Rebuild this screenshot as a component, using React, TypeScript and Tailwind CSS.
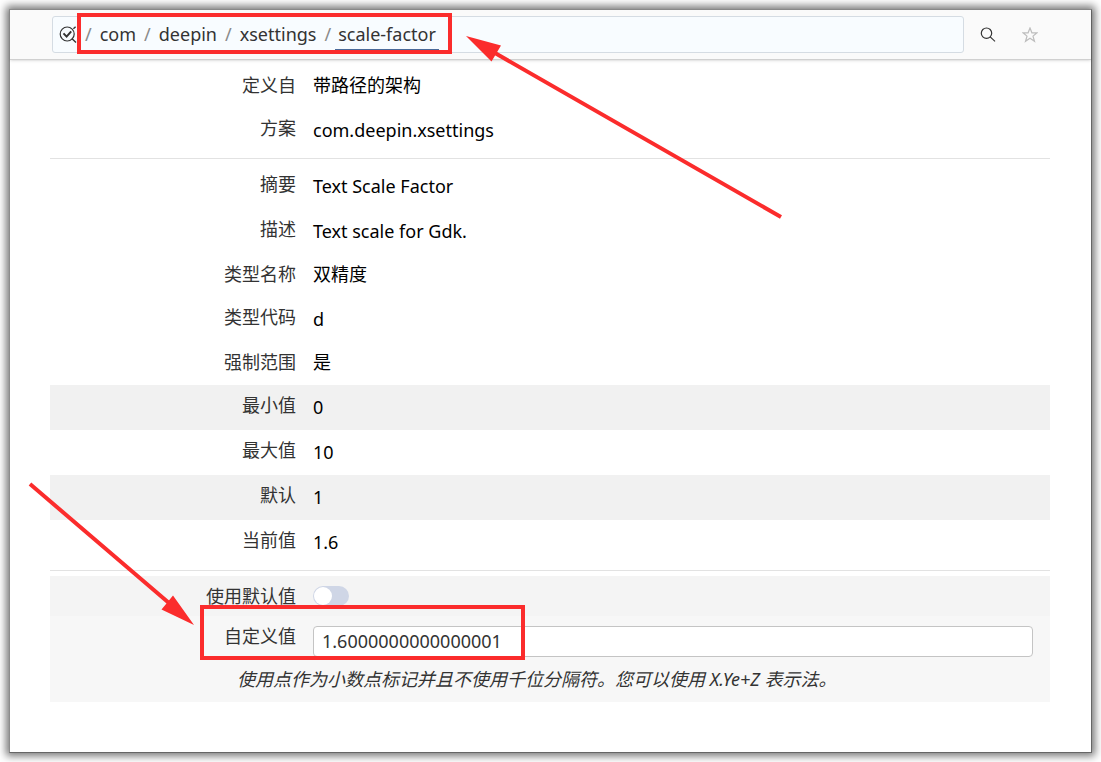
import { useState } from 'react';
import type { ReactNode } from 'react';

interface Property {
  label: string;
  value: string;
  cjk?: boolean;
  shaded?: boolean;
}

const PATH = ['com', 'deepin', 'xsettings'];

const SCHEMA_ROWS: Property[] = [
  { label: '定义自', value: '带路径的架构', cjk: true },
  { label: '方案', value: 'com.deepin.xsettings' },
];

const KEY_ROWS: Property[] = [
  { label: '摘要', value: 'Text Scale Factor' },
  { label: '描述', value: 'Text scale for Gdk.' },
  { label: '类型名称', value: '双精度', cjk: true },
  { label: '类型代码', value: 'd' },
  { label: '强制范围', value: '是', cjk: true },
  { label: '最小值', value: '0', shaded: true },
  { label: '最大值', value: '10' },
  { label: '默认', value: '1', shaded: true },
  { label: '当前值', value: '1.6' },
];

function PropertyList({ rows }: { rows: Property[] }) {
  return (
    <dl className="py-[5px]">
      {rows.map((row) => (
        <div
          key={row.label}
          className={`grid grid-cols-[246px_1fr] gap-x-[17px] ${row.shaded ? 'bg-[#f1f1f1]' : ''}`}
        >
          <dt className="text-right leading-[41px] text-[#333333]">{row.label}</dt>
          <dd className={`text-black ${row.cjk ? 'pb-[2px] leading-[41px]' : 'leading-[45px]'}`}>
            {row.value}
          </dd>
        </div>
      ))}
    </dl>
  );
}

function Crumb({ children }: { children: ReactNode }) {
  return (
    <>
      <a href="#" className="px-[4px] text-[#333333]">
        {children}
      </a>
      <span className="px-[4px] text-[#8a8a8a]">/</span>
    </>
  );
}

function PathBar() {
  return (
    <header className="flex h-[50px] items-center border-b border-[#d0d0d0] bg-[#fafafa] pr-[40px] pl-[42px] shadow-sm">
      <nav
        aria-label="路径"
        className="flex h-[37px] flex-1 items-center rounded-[3px] border border-[#d5dce3] bg-[#f8fcff] pl-[6px]"
      >
        <svg viewBox="0 0 18 18" className="h-[18px] w-[18px]" fill="none" stroke="#333333">
          <circle cx="8.2" cy="8" r="7" strokeWidth="1.2" />
          <path d="M4.5 7.4 7.6 10.6 12.2 5.4" strokeWidth="2" />
          <path d="M12.8 12.6 17 16.6M14.4 2.8 16.6 .8" strokeWidth="1.4" />
        </svg>
        <span className="pr-[4px] pl-[8px] text-[#8a8a8a]">/</span>
        {PATH.map((part) => (
          <Crumb key={part}>{part}</Crumb>
        ))}
        <a
          href="#"
          aria-current="page"
          className="border-b-2 border-[#4a6a9a] px-[3px] leading-[30px] text-[#333333]"
        >
          scale-factor
        </a>
      </nav>
      <div className="flex pl-[3px]">
        <button type="button" aria-label="搜索" className="flex h-[36px] w-[42px] items-center justify-center">
          <svg viewBox="0 0 16 16" className="h-[16px] w-[16px]" fill="none" stroke="#333333" strokeWidth="1.2">
            <circle cx="6.5" cy="6.2" r="5.2" />
            <path d="M10.2 9.9 15 14.4" />
          </svg>
        </button>
        <button type="button" aria-label="收藏" className="flex h-[36px] w-[42px] items-center justify-center">
          <svg viewBox="0 0 16 16" className="h-[16px] w-[16px]" fill="none" stroke="#bdbdbd" strokeWidth="1.2">
            <path d="M8 1 9.9 5.8H15L11 9.1 12.5 14.3 8 11.3 3.5 14.3 5 9.1 1 5.8H6.1Z" />
          </svg>
        </button>
      </div>
    </header>
  );
}

function CustomValue() {
  const [useDefault, setUseDefault] = useState(false);
  const [value, setValue] = useState('1.6000000000000001');

  return (
    <form className="mt-[5px] bg-[#f7f7f7]">
      <div className="grid h-[40px] grid-cols-[246px_1fr] items-center gap-x-[17px] bg-[#f4f4f4]">
        <label htmlFor="use-default" className="text-right">
          使用默认值
        </label>
        <input
          id="use-default"
          type="checkbox"
          role="switch"
          checked={useDefault}
          onChange={(e) => setUseDefault(e.target.checked)}
          className="h-[20px] w-[36px] appearance-none rounded-full bg-[#cfd6e6] p-[1px] before:block before:h-[18px] before:w-[18px] before:rounded-full before:bg-white checked:bg-[#4a8ee0] checked:before:ml-[16px]"
        />
      </div>
      <div className="grid grid-cols-[246px_1fr] gap-x-[17px] pr-[17px]">
        <label htmlFor="custom-value" className="text-right leading-[41px]">
          自定义值
        </label>
        <input
          id="custom-value"
          type="text"
          value={value}
          onChange={(e) => setValue(e.target.value)}
          className="mt-[10px] h-[31px] w-full rounded-[4px] border border-[#c4c4c4] bg-white px-[8px] pb-[2px] text-[#333333]"
        />
      </div>
      <p className="pl-[187px] leading-[45px] italic">
        使用点作为小数点标记并且不使用千位分隔符。您可以使用 X.Ye+Z 表示法。
      </p>
    </form>
  );
}

// Red call-outs drawn over the window
function Annotations() {
  return (
    <svg
      width="800"
      height="700"
      aria-hidden="true"
      className="pointer-events-none absolute top-0 left-0"
      fill="none"
      stroke="#fb2c2c"
      strokeWidth="4"
    >
      <rect x="79" y="15" width="371" height="37" />
      <rect x="202" y="607" width="321" height="51" />
      <path d="M781 217 495 53M30 484 169 603" />
      <path d="M466 36 501 45.500 491.500 61.500ZM194 625 173 595.500 161.500 609.500Z" fill="#fb2c2c" stroke="none" />
    </svg>
  );
}

export default function App() {
  return (
    <div className="relative flex min-h-screen bg-white p-[9px] font-['Noto_Sans','Noto_Sans_CJK_SC',sans-serif] text-[18px] text-[#333333]">
      <main className="flex-1 border border-t-[#8c8c8c] border-r-[#666666] border-b-[#666666] border-l-[#8c8c8c] bg-white shadow-[0_0_8px_3px_#777777]">
        <PathBar />
        <div className="mr-[41px] ml-[40px]">
          <PropertyList rows={SCHEMA_ROWS} />
          <hr className="border-[#e2e2e2]" />
          <PropertyList rows={KEY_ROWS} />
          <hr className="border-[#e2e2e2]" />
          <CustomValue />
        </div>
      </main>
      <Annotations />
    </div>
  );
}
